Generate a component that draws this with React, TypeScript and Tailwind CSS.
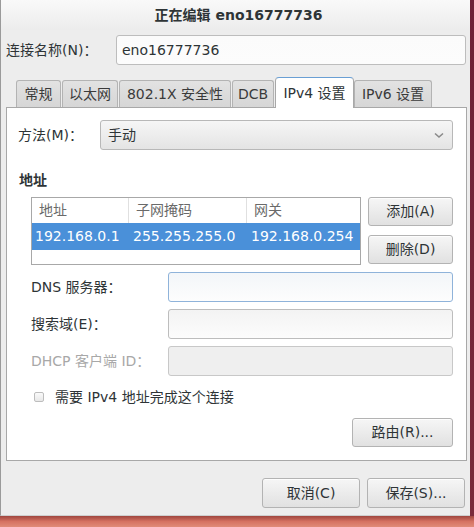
import React from 'react';

const font = { fontFamily: '"DejaVu Sans", "Noto Sans CJK SC", sans-serif' };

const btn =
    'flex items-center justify-center rounded-[3px] border border-[#b3b3b3] bg-gradient-to-b from-[#f6f6f6] to-[#e1e1e1] text-[14px] text-[#2e3436] shadow-[0_1px_0_rgba(255,255,255,0.8)_inset]';

const entry =
    'h-[30px] rounded-[3px] border border-[#bdbdbd] bg-gradient-to-b from-[#f3f3f3] to-[#fcfcfc]';

const tabs = [
    { label: '常规', w: 'w-[45px]' },
    { label: '以太网', w: 'w-[56px]' },
    { label: '802.1X 安全性', w: 'w-[112px]' },
    { label: 'DCB', w: 'w-[42px]' },
    { label: 'IPv4 设置', w: 'w-[79px]', active: true },
    { label: 'IPv6 设置', w: 'w-[78px]' },
];

function FormRow({ label, disabled, focused }: { label: string; disabled?: boolean; focused?: boolean }) {
    return (
        <div className="flex items-center h-[30px] pl-[24px] pr-[13px]">
            <span className={disabled ? 'w-[137px] text-[#a8a8a8]' : 'w-[137px] text-[#2e3436]'}>{label}</span>
            <div
                className={
                    focused
                        ? 'flex-1 h-[30px] rounded-[3px] border border-[#8fb3da] bg-gradient-to-b from-[#f3f6f9] to-[#fdfdfd]'
                        : disabled
                          ? 'flex-1 h-[30px] rounded-[3px] border border-[#c8c8c8] bg-[#efefef]'
                          : `flex-1 ${entry}`
                }
            />
        </div>
    );
}

export default function App() {
    return (
        <div className="w-[474px] h-[527px] flex flex-col bg-[#d9786a] text-[14px] text-[#2e3436]" style={font}>
            <div className="flex h-[516px]">
                {/* dialog */}
                <div className="w-[470px] h-full flex flex-col bg-[#ededed] border-l border-[#9a9a9a] border-b border-b-[#cfcfcf]">
                    {/* title bar */}
                    <div className="h-[30px] flex items-center justify-center bg-gradient-to-b from-[#f9f9f9] to-[#ececec] font-bold text-[14px] text-[#2e3436] pl-[6px]">
                        正在编辑 eno16777736
                    </div>

                    {/* connection name */}
                    <div className="flex items-center mt-[5px] pl-[5px] pr-[4px]">
                        <span className="w-[110px]">连接名称(N)：</span>
                        <div className={`flex-1 flex items-center px-[5px] ${entry} from-[#fbfbfb] to-[#fbfbfb]`}>eno16777736</div>
                    </div>

                    {/* tabs */}
                    <div className="flex items-end h-[30px] mt-[12px] pl-[15px] relative z-10">
                        {tabs.map((t) =>
                            t.active ? (
                                <div
                                    key={t.label}
                                    className={`${t.w} h-[31px] -mb-[1px] flex items-center justify-center bg-white border border-[#a8a8a8] border-b-0 border-t-[#6a9fd4] rounded-t-[4px]`}
                                >
                                    {t.label}
                                </div>
                            ) : (
                                <div
                                    key={t.label}
                                    className={`${t.w} h-[27px] flex items-center justify-center border border-[#b3b3b3] border-b-0 rounded-t-[3px] bg-gradient-to-b from-[#e2e2e2] to-[#d6d6d6] text-[#3a3a3a] mr-[1px]`}
                                >
                                    {t.label}
                                </div>
                            ),
                        )}
                    </div>

                    {/* notebook page */}
                    <div className="ml-[5px] mr-[3px] h-[354px] bg-white border border-[#a8a8a8] flex flex-col">
                        <div className="flex items-center mt-[12px] pl-[11px] pr-[13px]">
                            <span className="w-[82px]">方法(M)：</span>
                            <div className="flex-1 h-[30px] flex items-center justify-between px-[7px] rounded-[3px] border border-[#b8b8b8] bg-gradient-to-b from-[#f6f6f6] to-[#e4e4e4]">
                                <span>手动</span>
                                <svg width="10" height="7" viewBox="0 0 10 7" className="mr-[1px]">
                                    <path d="M1 1.5 L5 5 L9 1.5" fill="none" stroke="#8a8a8a" strokeWidth="1.6" />
                                </svg>
                            </div>
                        </div>

                        <div className="mt-[20px] pl-[12px] h-[20px] leading-[20px] font-bold">地址</div>

                        <div className="flex mt-[7px] pl-[24px] pr-[13px] gap-[7px]">
                            <div className="w-[330px] h-[68px] border border-[#a8a8a8] bg-white flex flex-col">
                                <div className="h-[25px] flex text-[#6a6a6a]">
                                    <div className="w-[97px] border-r border-[#e0e0e0] pl-[7px] flex items-center">地址</div>
                                    <div className="w-[118px] border-r border-[#e0e0e0] pl-[7px] flex items-center">子网掩码</div>
                                    <div className="flex-1 pl-[7px] flex items-center">网关</div>
                                </div>
                                <div className="h-[27px] flex bg-[#4a90d9] text-white">
                                    <div className="w-[97px] pl-[3px] flex items-center">192.168.0.1</div>
                                    <div className="w-[118px] pl-[4px] flex items-center">255.255.255.0</div>
                                    <div className="flex-1 pl-[4px] flex items-center">192.168.0.254</div>
                                </div>
                            </div>
                            <div className="flex-1 flex flex-col gap-[9px]">
                                <button className={`${btn} h-[29px]`}>添加(A)</button>
                                <button className={`${btn} h-[29px]`}>删除(D)</button>
                            </div>
                        </div>

                        <div className="mt-[7px] flex flex-col gap-[7px]">
                            <FormRow label="DNS 服务器：" focused />
                            <FormRow label="搜索域(E)：" />
                            <FormRow label="DHCP 客户端 ID：" disabled />
                        </div>

                        <div className="mt-[11px] h-[20px] flex items-center pl-[27px]">
                            <span className="w-[10px] h-[10px] border border-[#bdbdbd] rounded-[2px] bg-gradient-to-b from-[#fafafa] to-[#e8e8e8]" />
                            <span className="ml-[11px]">需要 IPv4 地址完成这个连接</span>
                        </div>

                        <div className="mt-[11px] flex justify-end pr-[13px]">
                            <button className={`${btn} w-[101px] h-[29px]`}>路由(R)...</button>
                        </div>
                    </div>

                    {/* action buttons */}
                    <div className="mt-[17px] flex justify-end gap-[7px] pr-[5px]">
                        <button className={`${btn} w-[98px] h-[30px]`}>取消(C)</button>
                        <button className={`${btn} w-[98px] h-[30px]`}>保存(S)...</button>
                    </div>
                </div>
                <div className="flex-1 bg-gradient-to-b from-[#6e2036] to-[#7a2a3a]" />
            </div>
            <div className="h-[11px] bg-gradient-to-b from-[#a0463f] via-[#d57262] to-[#e08b78]" />
        </div>
    );
}
